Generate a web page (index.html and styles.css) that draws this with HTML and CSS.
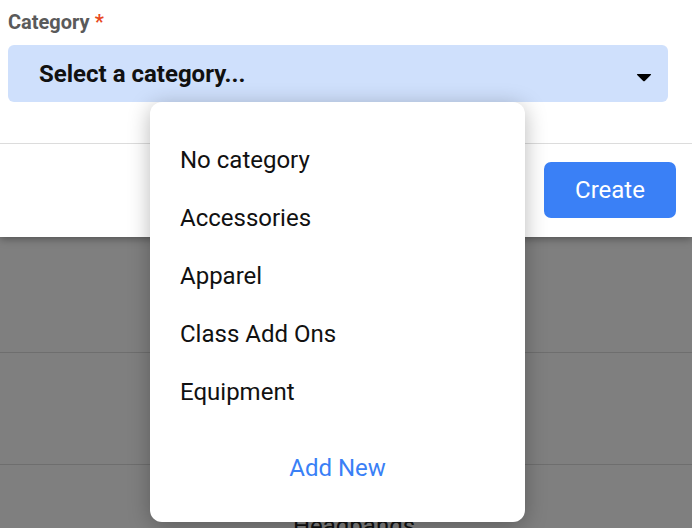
FILE: index.html
```html
<!DOCTYPE html>
<html>
<head>
<meta charset="utf-8">
<link rel="stylesheet" href="styles.css">
</head>
<body>
<div class="screen">
  <div class="modal">
    <div class="field">
      <label class="label">Category <span class="req">*</span></label>
      <div class="select">
        <span class="select-text">Select a category...</span>
        <svg class="caret" width="16" height="9" viewBox="0 0 16 9"><path d="M1.5 1 H14.5 Q15.6 1 14.8 1.9 L8.8 7.9 Q8 8.7 7.2 7.9 L1.2 1.9 Q0.4 1 1.5 1 Z" fill="#000"/></svg>
      </div>
    </div>
    <div class="footer">
      <button class="btn-create">Create</button>
    </div>
  </div>
  <div class="list">
    <div class="row"></div>
    <div class="row"></div>
    <div class="row"><span class="row-text">Headbands</span></div>
  </div>
  <div class="dropdown">
    <ul class="options">
      <li class="option">No category</li>
      <li class="option">Accessories</li>
      <li class="option">Apparel</li>
      <li class="option">Class Add Ons</li>
      <li class="option">Equipment</li>
    </ul>
    <div class="add-new">Add New</div>
  </div>
</div>
</body>
</html>
```
FILE: styles.css
```css
* { box-sizing: border-box; }
html, body { margin: 0; padding: 0; }
body {
  width: 692px;
  height: 528px;
  overflow: hidden;
  background: #7f7f7f;
  font-family: Roboto, "Liberation Sans", sans-serif;
}
.screen {
  position: relative;
  width: 692px;
  height: 528px;
  overflow: hidden;
}
.modal {
  background: #fff;
  height: 237px;
  box-shadow: 0 2px 8px rgba(0,0,0,0.35);
  position: relative;
  z-index: 1;
  display: flex;
  flex-direction: column;
}
.field {
  padding: 10px 24px 0 8px;
  height: 143px;
}
.label {
  display: block;
  font-size: 20px;
  line-height: 24px;
  font-weight: 700;
  color: #5a5a5a;
}
.req { color: #e8491d; }
.select {
  margin-top: 11px;
  height: 57px;
  background: #cfe0fc;
  border-radius: 6px;
  display: flex;
  align-items: center;
  justify-content: space-between;
  padding: 0 16px 0 31px;
}
.select-text {
  font-size: 24px;
  font-weight: 700;
  color: #111;
}
.caret { margin-top: 8px; }
.footer {
  border-top: 1px solid #dcdcdc;
  flex: 1;
  display: flex;
  justify-content: flex-end;
  align-items: flex-start;
  padding: 18px 16px 0 0;
}
.btn-create {
  width: 132px;
  height: 56px;
  border: none;
  border-radius: 7px;
  background: #3a80f6;
  color: #fff;
  font-family: Roboto, "Liberation Sans", sans-serif;
  font-size: 24px;
}
.list {
  padding-top: 4px;
}
.row {
  height: 112px;
  border-bottom: 1px solid #6e6e6e;
  display: flex;
  align-items: center;
  justify-content: center;
}
.row-text {
  font-size: 24px;
  color: #111;
  margin-top: 10px;
  padding-left: 16px;
}
.dropdown {
  position: absolute;
  left: 150px;
  top: 102px;
  width: 375px;
  height: 420px;
  background: #fff;
  border-radius: 12px;
  box-shadow: 0 4px 22px rgba(0,0,0,0.28);
  z-index: 2;
  display: flex;
  flex-direction: column;
}
.options {
  list-style: none;
  margin: 0;
  padding: 29px 0 0 30px;
}
.option {
  height: 58px;
  line-height: 58px;
  font-size: 24px;
  color: #111;
}
.add-new {
  margin-top: 18px;
  height: 58px;
  line-height: 58px;
  text-align: center;
  font-size: 24px;
  color: #3a80f6;
}
```
